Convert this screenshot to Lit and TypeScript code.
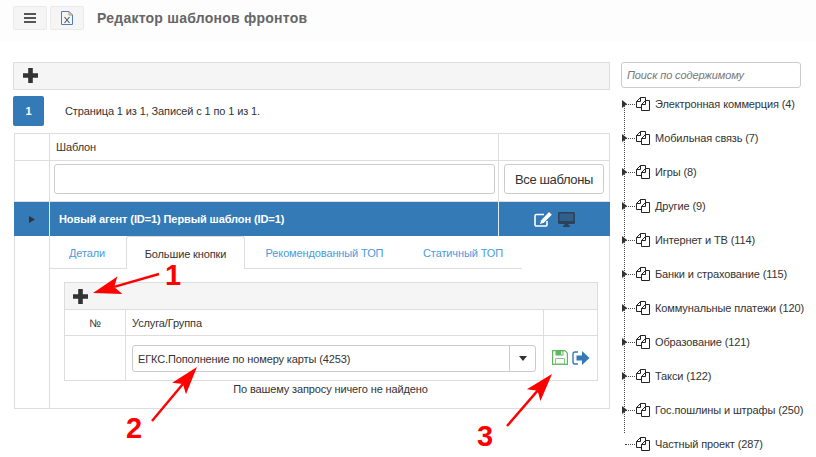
import { LitElement, html, css, svg } from "lit";
import { customElement } from "lit/decorators.js";

const plus = html`<svg class="plus" width="15" height="15" viewBox="0 0 15 15"><path d="M5.200 0h4.600v5.200H15v4.600H9.800V15H5.200V9.800H0V5.200h5.200z" fill="#333"/></svg>`;
const copyIcon = html`<svg class="copy" width="15" height="15" viewBox="0 0 15 15" fill="none" stroke="#222" stroke-width="1"><path d="M4.500 .5H9.500V4M4.500 .5L.5 4.500V10.500H5.500M4.500 .5V4.500H.5"/><path d="M9.500 3.500H13.500V13.500H5.500V7.500z" fill="#fff"/><path d="M9.500 3.500V7.500H5.500"/></svg>`;

const tree = [
  "Электронная коммерция (4)", "Мобильная связь (7)", "Игры (8)", "Другие (9)",
  "Интернет и ТВ (114)", "Банки и страхование (115)", "Коммунальные платежи (120)",
  "Образование (121)", "Такси (122)", "Гос.пошлины и штрафы (250)", "Частный проект (287)",
];

@customElement("app-root")
export class AppRoot extends LitElement {
  static styles = css`
    :host { display: block; position: relative; width: 816px; height: 457px; overflow: hidden; background: #fff;
      font-family: "Liberation Sans", Arial, sans-serif; font-size: 11px; letter-spacing: -0.12px; color: #333; }
    * { box-sizing: border-box; }
    .top { display: flex; align-items: center; gap: 3px; height: 42px; padding: 0 0 6px 13px; background: #fdfdfd; }
    .tbtn { width: 34px; height: 24px; background: #f5f5f5; border: 1px solid #eaeaea; border-radius: 2px; display: flex; align-items: center; justify-content: center; }
    .title { margin-left: 10px; font-size: 14px; font-weight: bold; color: #666; letter-spacing: .24px; }
    .page { display: flex; padding-top: 20px; }
    .left { width: 597px; margin-left: 13px; }
    .bar { height: 28px; background: #f5f5f5; border: 1px solid #ddd; display: flex; align-items: center; padding: 0 0 2px 9px; }
    .pager { display: flex; align-items: center; margin-top: 6px; height: 30px; }
    .pnum { width: 31px; height: 30px; background: #337ab7; color: #fff; font-weight: bold; border-radius: 2px; display: flex; align-items: center; justify-content: center; }
    .pinfo { margin-left: 21px; }
    .grid { margin: 7px 0 0 1px; width: 596px; border: 1px solid #ddd; }
    .row { display: grid; grid-template-columns: 35px 449px 1fr; }
    .row > div { border-right: 1px solid #ddd; }
    .row > div:last-child { border-right: 0; }
    .r-head { height: 27px; border-bottom: 1px solid #ddd; }
    .r-head > div { display: flex; align-items: center; }
    .r-head .name { padding-left: 6px; }
    .r-filter { height: 41px; border-bottom: 1px solid #ddd; }
    .r-filter .mid { padding: 3px 0 0 4px; }
    .r-filter .end { padding: 3px 0 0 5px; }
    .inp { display: block; width: 441px; height: 30px; border: 1px solid #ccc; border-radius: 3px; background: #fff; }
    .allbtn { width: 100px; height: 30px; border: 1px solid #ccc; border-radius: 3px; display: flex; align-items: center; justify-content: center; font-size: 13px; letter-spacing: -0.35px; background: #fff; }
    .r-blue { height: 34px; background: #337ab7; color: #fff; margin: 0 -1px; grid-template-columns: 36px 449px 1fr; }
    .r-blue > div { display: flex; align-items: center; border-right-color: #e4ecf4; }
    .r-blue .tri { justify-content: center; color: #333; }
    .r-blue .name { padding-left: 9px; font-weight: bold; letter-spacing: -0.1px; }
    .r-blue .ic { justify-content: center; gap: 6px; }
    .detail { display: grid; grid-template-columns: 35px 1fr; height: 172px; }
    .detail .gut { border-right: 1px solid #ddd; }
    .tabs { display: flex; width: 472px; height: 33px; border-bottom: 1px solid #ddd; color: #4a9bdc; }
    .tab { display: flex; align-items: center; justify-content: center; height: 32px; padding-top: 1px; }
    .tab.first { padding-right: 2px; }
    .tab.a { height: 33px; background: #fff; color: #333; border: 1px solid #ddd; border-bottom: 0; border-radius: 3px 3px 0 0; }
    .sub { margin: 13px 0 0 14px; width: 534px; border: 1px solid #ddd; }
    .sub .bar { height: 27px; border: 0; border-bottom: 1px solid #ddd; padding: 0 0 0 8px; }
    .srow { display: grid; grid-template-columns: 61px 418px 1fr; }
    .srow > div { border-right: 1px solid #ddd; }
    .srow > div:last-child { border-right: 0; }
    .s-head { height: 26px; border-bottom: 1px solid #ddd; }
    .s-head > div { display: flex; align-items: center; }
    .s-head .no { justify-content: center; }
    .s-head .name { padding-left: 6px; }
    .s-body { height: 44px; }
    .s-body .mid { padding: 9px 7px 0 6px; }
    .sel { display: flex; height: 27px; border: 1px solid #ccc; border-radius: 3px; }
    .sel .val { flex: 1; display: flex; align-items: center; padding-left: 5px; }
    .sel .caret { width: 26px; border-left: 1px solid #ccc; display: flex; align-items: center; justify-content: center; }
    .s-body .act { display: flex; align-items: center; gap: 4px; padding: 0 0 1px 8px; }
    .none { text-align: center; width: 561px; padding-top: 1px; height: 14px; line-height: 14px; }
    .side { margin-left: 11px; width: 195px; position: relative; }
    .search { width: 180px; height: 26px; border: 1px solid #ccc; border-radius: 3px; padding-left: 5px; display: flex; align-items: center; font-style: italic; color: #777; }
    .treebox { position: relative; margin-top: 6px; }
    .vline { position: absolute; left: 3px; top: 8px; height: 331px; border-left: 1px dotted #444; }
    .item { display: flex; align-items: center; height: 20px; margin-bottom: 14px; position: relative; }
    .hl { width: 10px; margin-left: 4px; border-top: 1px dotted #444; }
    .item .t { width: 0; height: 0; position: absolute; left: 1px; top: 6px; border-left: 5px solid #333; border-top: 4px solid transparent; border-bottom: 4px solid transparent; }
    .copy { margin: 0 4px 0 1px; flex: none; }
    .lbl { white-space: nowrap; }
    .over { position: absolute; left: 0; top: 0; pointer-events: none; }
    .num { position: absolute; color: #f00; font-weight: bold; font-size: 29px; line-height: 30px; letter-spacing: 0; }
    .n1 { left: 165px; top: 260px; }
    .n2 { left: 126px; top: 413px; }
    .n3 { left: 477px; top: 421px; }
  `;

  arrow(x1: number, y1: number, x2: number, y2: number) {
    const a = Math.atan2(y2 - y1, x2 - x1), c = Math.cos(a), s = Math.sin(a);
    const len = 28, w = 9, nb = 22;
    const bx = x2 - c * len, by = y2 - s * len;
    const nx = x2 - c * nb, ny = y2 - s * nb;
    return svg`<line x1=${x1} y1=${y1} x2=${nx} y2=${ny} stroke="#f00" stroke-width="2.4"/>
      <path d="M${x2} ${y2}L${bx - s * w} ${by + c * w}L${nx} ${ny}L${bx + s * w} ${by - c * w}z" fill="#f00"/>`;
  }

  render() {
    return html`
      <div class="top">
        <div class="tbtn"><svg width="12" height="10" viewBox="0 0 12 10"><path d="M0 0h12v2H0zM0 4h12v2H0zM0 8h12v2H0z" fill="#555"/></svg></div>
        <div class="tbtn"><svg width="12" height="14" viewBox="0 0 12 14" fill="none"><path d="M.5.5h7.500l3.500 3.500v9.500H.5z" stroke="#4a7fb5"/><path d="M8 .5V4h3.500" stroke="#b98a6a"/><path d="M3.500 6l5 6M8.500 6l-5 6" stroke="#555" stroke-width="1.100"/></svg></div>
        <div class="title">Редактор шаблонов фронтов</div>
      </div>
      <div class="page">
        <div class="left">
          <div class="bar">${plus}</div>
          <div class="pager"><div class="pnum">1</div><div class="pinfo">Страница 1 из 1, Записей с 1 по 1 из 1.</div></div>
          <div class="grid">
            <div class="row r-head"><div></div><div class="name">Шаблон</div><div></div></div>
            <div class="row r-filter"><div></div><div class="mid"><div class="inp"></div></div><div class="end"><div class="allbtn">Все шаблоны</div></div></div>
            <div class="row r-blue">
              <div class="tri"><svg width="6" height="7" viewBox="0 0 6 7"><path d="M0 0l6 3.500L0 7z" fill="#333"/></svg></div>
              <div class="name">Новый агент (ID=1) Первый шаблон (ID=1)</div>
              <div class="ic">
                <svg width="18" height="15" viewBox="0 0 18 15" fill="none"><path d="M10 2.500H2.500a1.500 1.500 0 0 0-1.500 1.500v8.500a1.500 1.500 0 0 0 1.500 1.500h9a1.500 1.500 0 0 0 1.500-1.500V9" stroke="#fff" stroke-width="1.600"/><path d="M15 0l2.800 2.800-8 8L6 12l1.200-3.800z" fill="#fff"/></svg>
                <svg width="17" height="15" viewBox="0 0 17 15"><path d="M1.500 0h14A1.500 1.500 0 0 1 17 1.500v9a1.500 1.500 0 0 1-1.500 1.500H10.500v1.500h1.500V15H5v-1.500h1.500V12h-5A1.500 1.500 0 0 1 0 10.500v-9A1.500 1.500 0 0 1 1.500 0z" fill="#2b4258"/><path d="M1.500 1.500h14V9h-14z" fill="#2f5f8c"/></svg>
              </div>
            </div>
            <div class="detail">
              <div class="gut"></div>
              <div>
                <div class="tabs">
                  <div class="tab first" style="width:76px">Детали</div>
                  <div class="tab a" style="width:119px">Большие кнопки</div>
                  <div class="tab" style="width:159px">Рекомендованный ТОП</div>
                  <div class="tab" style="width:118px">Статичный ТОП</div>
                </div>
                <div class="sub">
                  <div class="bar">${plus}</div>
                  <div class="srow s-head"><div class="no">№</div><div class="name">Услуга/Группа</div><div></div></div>
                  <div class="srow s-body">
                    <div></div>
                    <div class="mid"><div class="sel"><div class="val">ЕГКС.Пополнение по номеру карты (4253)</div><div class="caret"><svg width="8" height="5" viewBox="0 0 8 5"><path d="M0 0h8L4 5z" fill="#333"/></svg></div></div></div>
                    <div class="act">
                      <svg width="16" height="15" viewBox="0 0 16 15" fill="none"><path d="M.6.6h12.200l2.600 2.600v11.200H.6z" stroke="#5cb85c" stroke-width="1.200"/><path d="M3.500 1h8v4.500h-8z" fill="#5cb85c"/><path d="M9 1.500h1.500v3H9z" fill="#fff"/><path d="M3.500 8.500h9V14h-9z" stroke="#7fc97f"/></svg>
                      <svg width="18" height="14" viewBox="0 0 18 14" fill="none"><path d="M6 1H3a2 2 0 0 0-2 2v8a2 2 0 0 0 2 2h3" stroke="#337ab7" stroke-width="1.400"/><path d="M4.500 4.500H10V0l7.500 7-7.500 7V9.500H4.500z" fill="#337ab7"/></svg>
                    </div>
                  </div>
                </div>
                <div class="none">По вашему запросу ничего не найдено</div>
              </div>
            </div>
          </div>
        </div>
        <div class="side">
          <div class="search">Поиск по содержимому</div>
          <div class="treebox">
            <div class="vline"></div>
            ${tree.map((t, i) => html`<div class="item">${i < tree.length - 1 ? html`<span class="t"></span>` : ""}<span class="hl"></span>${copyIcon}<span class="lbl">${t}</span></div>`)}
          </div>
        </div>
      </div>
      <svg class="over" width="816" height="457">
        ${this.arrow(159, 274, 93, 293)}
        ${this.arrow(152, 421, 197, 367)}
        ${this.arrow(507, 426, 552, 374)}
      </svg>
      <div class="num n1">1</div>
      <div class="num n2">2</div>
      <div class="num n3">3</div>
    `;
  }
}
